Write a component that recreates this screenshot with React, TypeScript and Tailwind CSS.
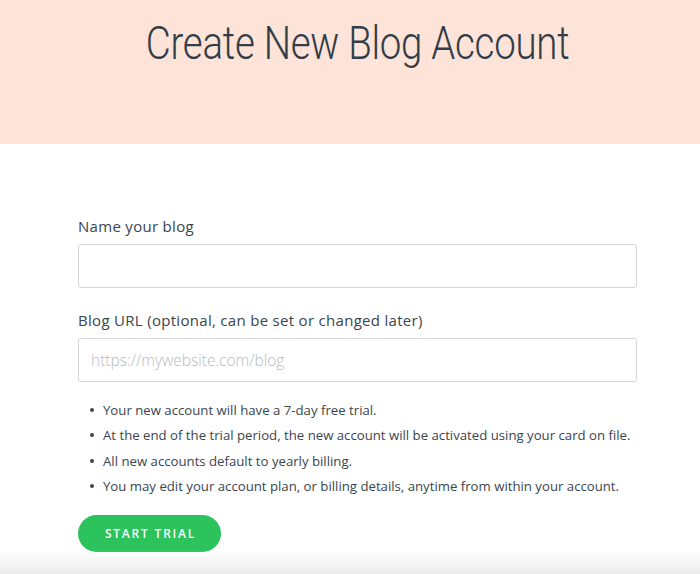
import React from 'react';

const notes = [
  'Your new account will have a 7-day free trial.',
  'At the end of the trial period, the new account will be activated using your card on file.',
  'All new accounts default to yearly billing.',
  'You may edit your account plan, or billing details, anytime from within your account.',
];

const App: React.FC = () => {
  return (
    <div className="relative min-h-[574px] w-[700px] overflow-hidden bg-white font-['Open_Sans',sans-serif] text-[#3a4550]">
      {/* Header band */}
      <div className="h-[144px] bg-[#fde3d8] pl-[16px] pt-[14px] text-center">
        <h1 className="inline-block origin-center scale-x-[0.835] font-['Roboto',sans-serif] text-[46px] font-light leading-[58px] tracking-[-0.3px] text-[#333d48]">
          Create New Blog Account
        </h1>
      </div>

      {/* Form */}
      <div className="w-[637px] pl-[78px] pt-[72px]">
        <label className="block text-[15px] leading-[20px] tracking-[0.3px] text-[#3a4550]">Name your blog</label>
        <input
          type="text"
          className="mt-[8px] block h-[44px] w-full rounded-[3px] border border-[#d5d5d5] bg-white px-[12px] text-[15px] outline-none"
        />

        <label className="mt-[22px] block text-[15px] leading-[20px] tracking-[0.3px] text-[#3a4550]">
          Blog URL (optional, can be set or changed later)
        </label>
        <input
          type="text"
          placeholder="https://mywebsite.com/blog"
          className="mt-[8px] block h-[44px] w-full rounded-[3px] border border-[#d5d5d5] bg-white px-[12px] text-[15.5px] font-light text-[#3a4550] outline-none placeholder:text-[#b8bcc0]"
        />

        <ul className="mt-[19px] flex flex-col gap-[7px] whitespace-nowrap pl-[12px] text-[13.2px] leading-[18.3px] text-[#3a4550]">
          {notes.map((n) => (
            <li key={n} className="flex items-start gap-[9px]">
              <span className="mt-[7px] h-[4px] w-[4px] shrink-0 rounded-full bg-[#3a4550]" />
              <span>{n}</span>
            </li>
          ))}
        </ul>

        <button
          type="button"
          className="mt-[20px] h-[37px] w-[143px] rounded-full bg-[#2cc25c] pl-[2px] text-[12px] font-semibold tracking-[1.8px] text-white"
        >
          START TRIAL
        </button>
      </div>

      {/* bottom fade */}
      <div className="pointer-events-none absolute bottom-0 left-0 h-[24px] w-full bg-gradient-to-b from-white/0 to-[#ebebeb]" />
    </div>
  );
};

export default App;
